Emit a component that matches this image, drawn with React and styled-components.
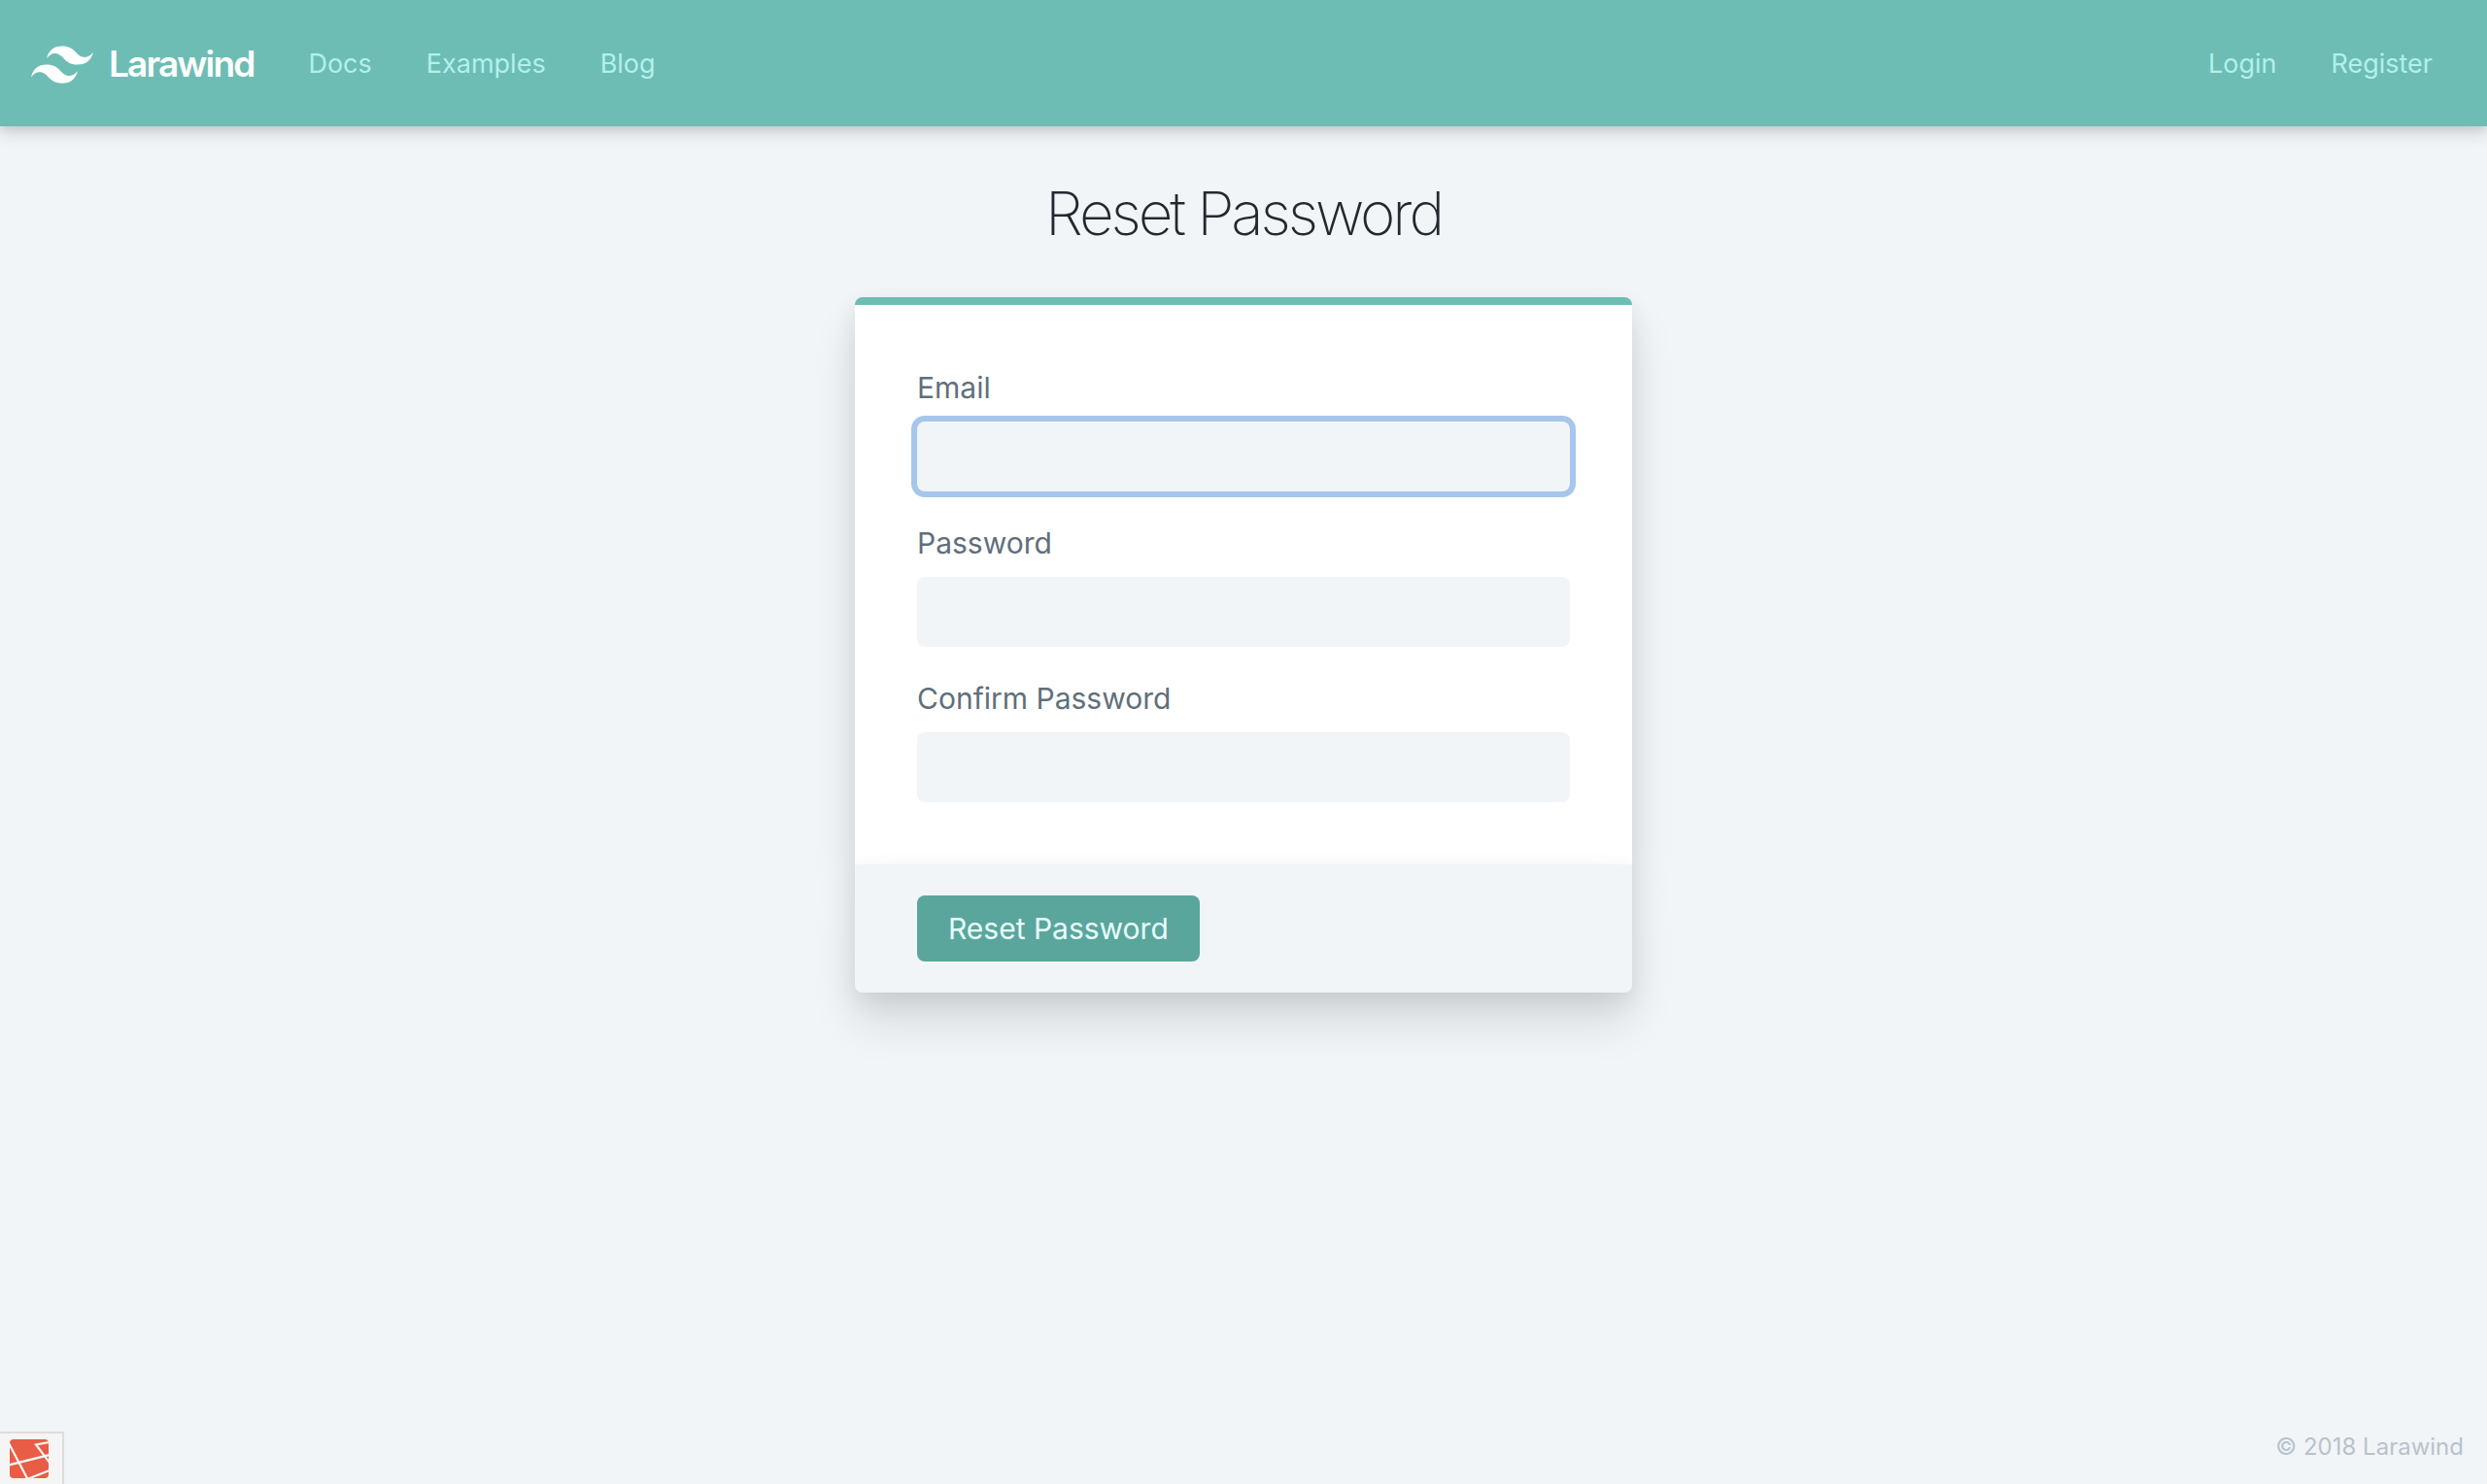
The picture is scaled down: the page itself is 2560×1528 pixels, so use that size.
import React from "react";
import styled, { createGlobalStyle, css } from "styled-components";

const GlobalStyle = createGlobalStyle`
  *, *::before, *::after { box-sizing: border-box; }
  body {
    margin: 0;
    background: #f1f5f8;
    color: #22292f;
    font-family: Inter, "Liberation Sans", sans-serif;
    -webkit-font-smoothing: antialiased;
  }
`;

const largeShadow = css`
  box-shadow: 0 30px 48px rgba(0, 0, 0, 0.11), 0 10px 24px rgba(0, 0, 0, 0.08);
`;

const Page = styled.div`
  min-height: 100vh;
  display: flex;
  flex-direction: column;
`;

const Header = styled.header`
  display: flex;
  align-items: center;
  justify-content: space-between;
  padding: 34px 56px 32px 32px;
  background: #6dbdb5;
  box-shadow: 0 8px 16px rgba(0, 0, 0, 0.12), 0 4px 8px rgba(0, 0, 0, 0.08);
`;

const Nav = styled.nav`
  display: flex;
  align-items: center;
  gap: 56px;
`;

const Brand = styled.a`
  display: flex;
  align-items: center;
  gap: 16px;
  color: #fff;
  font-size: 37px;
  font-weight: 600;
  line-height: 48px;
  letter-spacing: -0.05em;
  text-decoration: none;
`;

const NavLink = styled.a`
  color: #b2f0ec;
  font-size: 27px;
  line-height: 36px;
  text-decoration: none;
`;

const Main = styled.main`
  flex: 1;
  display: flex;
  flex-direction: column;
  align-items: center;
  padding: 48px 32px;
`;

const Title = styled.h1`
  margin: 0 0 44px;
  font-size: 62px;
  font-weight: 200;
  line-height: 84px;
  letter-spacing: -0.05em;
`;

const Card = styled.form`
  width: 100%;
  max-width: 800px;
`;

const Fields = styled.div`
  display: flex;
  flex-direction: column;
  gap: 32px;
  padding: 64px;
  border-top: 8px solid #6dbdb5;
  border-radius: 8px 8px 0 0;
  background: #fff;
  ${largeShadow}
`;

const Field = styled.div`
  display: flex;
  flex-direction: column;
  gap: 14px;
`;

const Label = styled.label`
  color: #606f7b;
  font-size: 30px;
  line-height: 42px;
`;

const Input = styled.input`
  width: 100%;
  height: 72px;
  padding: 0 24px;
  border: 0;
  border-radius: 8px;
  background: #f1f5f8;
  color: #22292f;
  font: inherit;
  font-size: 30px;
  caret-color: transparent;

  &:focus {
    outline: 0;
    box-shadow: 0 0 0 6px #a6c6eb;
  }
`;

const CardFooter = styled.div`
  padding: 32px 64px;
  border-radius: 0 0 8px 8px;
  background: #f1f5f8;
  ${largeShadow}
`;

const Submit = styled.button`
  padding: 14px 32px;
  border: 0;
  border-radius: 8px;
  background: #5aa69c;
  color: #e8fffe;
  font: inherit;
  font-size: 30px;
  line-height: 40px;
  display: block;
`;

const Footer = styled.footer`
  padding: 24px;
  color: #b8c2cc;
  font-size: 24px;
  line-height: 28px;
  text-align: right;
`;

const DebugToggle = styled.button`
  position: fixed;
  left: 0;
  bottom: 0;
  display: flex;
  padding: 6px 14px 6px 10px;
  border: solid #ddd;
  border-width: 2px 2px 0 0;
  background: #f5f5f5;
`;

const LogoMark = () => (
  <svg width="64" height="64" viewBox="0 0 54 54" fill="currentColor" aria-hidden="true">
    <path d="M13.5 22.1c1.8-7.2 6.3-10.8 13.5-10.8 10.8 0 12.15 8.1 17.55 9.45 3.6.9 6.75-.45 9.45-4.05-1.8 7.2-6.3 10.8-13.5 10.8-10.8 0-12.15-8.1-17.55-9.45-3.6-.9-6.75.45-9.45 4.05zM0 38.3c1.8-7.2 6.3-10.8 13.5-10.8 10.8 0 12.15 8.1 17.55 9.45 3.6.9 6.75-.45 9.45-4.05-1.8 7.2-6.3 10.8-13.5 10.8-10.8 0-12.15-8.1-17.55-9.45-3.6-.9-6.75.45-9.45 4.05z" />
  </svg>
);

const DebugIcon = () => (
  <svg width="40" height="40" viewBox="0 0 40 40" aria-hidden="true">
    <defs>
      <clipPath id="tile">
        <rect width="40" height="40" rx="4" />
      </clipPath>
    </defs>
    <g clipPath="url(#tile)">
      <rect width="40" height="40" fill="#e95c45" />
      <g fill="none" stroke="#f5f5f5" strokeWidth="2.2">
        <path d="M-1 4 L19 42" />
        <path d="M-1 26.500 L41 16" />
        <path d="M41 3 L27 5.500 L41 24" />
        <path d="M18 41 L41 32" />
      </g>
    </g>
  </svg>
);

const fields = [
  { id: "email", label: "Email", type: "email", autoFocus: true },
  { id: "password", label: "Password", type: "password" },
  { id: "password-confirm", label: "Confirm Password", type: "password" },
];

export default function App() {
  return (
    <>
      <GlobalStyle />
      <Page>
        <Header>
          <Nav aria-label="Main">
            <Brand href="#">
              <LogoMark />
              Larawind
            </Brand>
            <NavLink href="#docs">Docs</NavLink>
            <NavLink href="#examples">Examples</NavLink>
            <NavLink href="#blog">Blog</NavLink>
          </Nav>
          <Nav aria-label="Account">
            <NavLink href="#login">Login</NavLink>
            <NavLink href="#register">Register</NavLink>
          </Nav>
        </Header>
        <Main>
          <Title>Reset Password</Title>
          <Card onSubmit={(event) => event.preventDefault()}>
            <Fields>
              {fields.map(({ id, label, ...input }) => (
                <Field key={id}>
                  <Label htmlFor={id}>{label}</Label>
                  <Input id={id} name={id} {...input} />
                </Field>
              ))}
            </Fields>
            <CardFooter>
              <Submit type="submit">Reset Password</Submit>
            </CardFooter>
          </Card>
        </Main>
        <Footer>© 2018 Larawind</Footer>
      </Page>
      <DebugToggle type="button" aria-label="Open debug bar">
        <DebugIcon />
      </DebugToggle>
    </>
  );
}
